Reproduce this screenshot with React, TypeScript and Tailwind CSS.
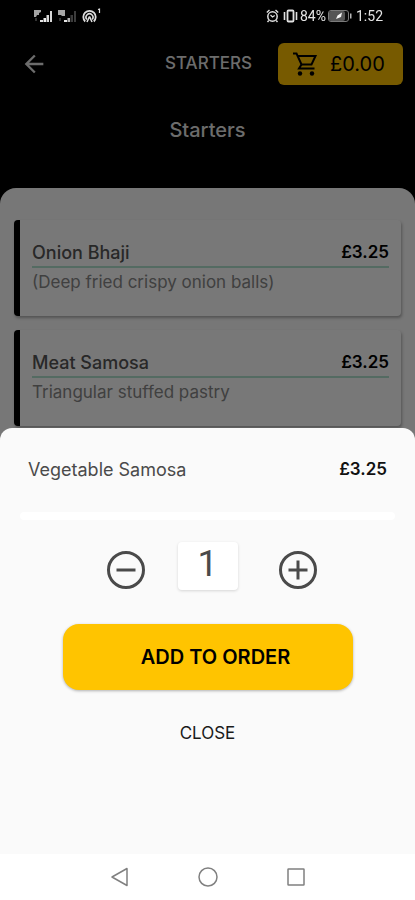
import React, { useState } from 'react';
import { MdArrowBack } from 'react-icons/md';

interface MenuItem {
  name: string;
  description: string;
  price: string;
}

const items: MenuItem[] = [
  { name: 'Onion Bhaji', description: '(Deep fried crispy onion balls)', price: '£3.25' },
  { name: 'Meat Samosa', description: 'Triangular stuffed pastry', price: '£3.25' },
];

function SignalIcon({ weak = false }: { weak?: boolean }) {
  const rest = weak ? '#3c3c3c' : '#d8d8d8';
  return (
    <svg width="20" height="14" viewBox="0 0 20 14" aria-hidden="true">
      <path d={weak ? 'M0 1h7v6H4l-1-1H0z' : 'M0 1h7v2L5 4v2H3l-1 2H0z'} fill="#a5a5a5" />
      <path d="M1 9h2v3H1z" fill="#333333" />
      <path d="M6 11h3v2H6z" fill="#e5e5e5" />
      <path d="M9.500 9h2.500v4H9.500z" fill={weak ? '#b5b5b5' : '#f0f0f0'} />
      <path d="M12.500 6H15v7h-2.500z" fill={rest} />
      <path d="M16 2h2v11h-2z" fill={rest} />
    </svg>
  );
}

function HotspotIcon() {
  return (
    <svg width="20" height="16" viewBox="0 0 20 16" fill="none" stroke="#dddddd" aria-hidden="true">
      <path d="M3.200 13.500A6.200 6.200 0 1 1 11.800 13.500" strokeWidth="1.800" />
      <path d="M4.800 11.500A3.500 3.500 0 1 1 10.200 11.500" strokeWidth="1.500" />
      <path d="M7.500 8.500L5 14M7.500 8.500L10 14" strokeWidth="1.600" />
      <path d="M16 1.500L17.500 1v4" strokeWidth="1.200" />
    </svg>
  );
}

function AlarmIcon() {
  return (
    <svg width="13" height="14" viewBox="0 0 13 14" fill="none" stroke="#e0e0e0" aria-hidden="true">
      <circle cx="6.5" cy="7.5" r="4.7" strokeWidth="1.5" />
      <path d="M.8 3.500L3.500 1M12.200 3.500L9.500 1M2.800 11.500L1.500 13M10.200 11.500L11.500 13" strokeWidth="1.400" />
      <path d="M4.500 6L6.500 8l2.200-1.500" strokeWidth="1.200" />
    </svg>
  );
}

function VibrateIcon() {
  return (
    <svg width="15" height="14" viewBox="0 0 15 14" fill="none" stroke="#e0e0e0" aria-hidden="true">
      <rect x="4.500" y="1.500" width="6" height="11" rx="1" strokeWidth="1.800" />
      <path d="M1.500 3v8M13.500 3v8" strokeWidth="1.600" />
    </svg>
  );
}

function BatteryIcon() {
  return (
    <svg width="24" height="12" viewBox="0 0 24 12" aria-hidden="true">
      <rect x="0.500" y="0.500" width="20" height="11" rx="2.500" fill="#0a0a0a" stroke="#7a7a7a" />
      <rect x="1" y="1" width="16" height="10" rx="2" fill="#555555" />
      <path d="M8 9l1.500-3.500L14 2.500 13 7z" fill="#f5f5f5" />
      <path d="M22 3.500h1.500v5H22z" fill="#b5b5b5" />
    </svg>
  );
}

function CartIcon() {
  return (
    <svg width="26" height="26" viewBox="0 0 26 26" fill="none" stroke="currentColor" strokeWidth="2" aria-hidden="true" className="shrink-0">
      <path d="M1 2.500h3.500L9.500 13.500h10L23.500 5H6" />
      <path d="M9.500 13.500L7 17.500h15.500" />
      <circle cx="8" cy="22.500" r="2.200" fill="currentColor" stroke="none" />
      <circle cx="20" cy="22.500" r="2.200" fill="currentColor" stroke="none" />
    </svg>
  );
}

function StepIcon({ path }: { path: string }) {
  return (
    <svg width="40" height="40" viewBox="0 0 40 40" fill="none" stroke="currentColor" strokeWidth="3" aria-hidden="true">
      <circle cx="20" cy="20" r="17.500" />
      <path d={path} />
    </svg>
  );
}

function StatusBar() {
  return (
    <div className="relative z-20 flex h-8 items-center justify-between px-8 text-[#e4e4e4]">
      <div className="flex items-center gap-1 pl-0.5">
        <SignalIcon />
        <SignalIcon weak />
        <HotspotIcon />
      </div>
      <div className="flex items-center gap-0.5 font-[Roboto,sans-serif] text-sm">
        <AlarmIcon />
        <span className="pl-0.5">
          <VibrateIcon />
        </span>
        <span>84%</span>
        <BatteryIcon />
        <span className="pl-0.5">1:52</span>
      </div>
    </div>
  );
}

function MenuCard({ item }: { item: MenuItem }) {
  return (
    <li className="h-24 rounded-sm border-l-6 border-black bg-[#f0f0f0] px-3 pt-5 shadow-[1px_2px_3px_rgba(0,0,0,0.3)]">
      <div className="flex h-7 items-center justify-between border-b-2 border-[#a9d6c4]">
        <span className="text-lg font-medium text-[#505050]">{item.name}</span>
        <span className="text-[17px] font-semibold text-black">{item.price}</span>
      </div>
      <p className="pt-0.5 text-[17px] leading-6 text-[#808080]">{item.description}</p>
    </li>
  );
}

function OrderSheet() {
  const [quantity, setQuantity] = useState(1);

  return (
    <section
      role="dialog"
      aria-label="Add to order"
      className="fixed inset-x-0 bottom-0 z-10 rounded-t-xl bg-[#fafafa]"
    >
      <div className="flex h-21 items-center justify-between px-7">
        <h2 className="text-lg text-[#4a4a4a]">Vegetable Samosa</h2>
        <span className="text-[17px] font-semibold text-[#111111]">£3.25</span>
      </div>
      <hr className="mx-5 h-2 rounded-sm border-0 bg-white" />

      <div className="flex items-center justify-center gap-8 pt-5.5 pl-2">
        <button
          type="button"
          aria-label="Remove one"
          onClick={() => setQuantity((n) => Math.max(1, n - 1))}
          className="pt-2 text-[#4a4a4a]"
        >
          <StepIcon path="M10.500 20h19" />
        </button>
        <input
          aria-label="Quantity"
          inputMode="numeric"
          value={quantity}
          onChange={(e) => setQuantity(Number(e.target.value) || 1)}
          className="h-12 w-15 rounded-sm bg-white pb-1 text-center font-[Roboto,sans-serif] text-4xl text-[#4a4a4a] shadow-[0_1px_3px_rgba(0,0,0,0.15)]"
        />
        <button
          type="button"
          aria-label="Add one"
          onClick={() => setQuantity((n) => n + 1)}
          className="pt-2 pl-2 text-[#4a4a4a]"
        >
          <StepIcon path="M10.500 20h19M20 10.500v19" />
        </button>
      </div>

      <div className="flex flex-col items-center px-15 pt-8.5">
        <button
          type="button"
          className="h-16.5 w-full max-w-[290px] rounded-2xl bg-[#ffc400] pl-4 text-xl font-semibold text-black shadow-[0_1px_3px_rgba(0,0,0,0.3)]"
        >
          ADD TO ORDER
        </button>
        <button type="button" className="mt-7 h-8 px-4 text-[17px] text-[#1a1a1a]">
          CLOSE
        </button>
      </div>

      <nav className="mt-26 flex h-11.5 items-center justify-center gap-16 bg-white text-[#808080]">
        <button type="button" aria-label="Back">
          <svg width="24" height="24" viewBox="0 0 24 24" fill="none" stroke="currentColor" strokeWidth="1.500" strokeLinejoin="round">
            <path d="M19 3.500v17L4 12z" />
          </svg>
        </button>
        <button type="button" aria-label="Home">
          <svg width="24" height="24" viewBox="0 0 24 24" fill="none" stroke="currentColor" strokeWidth="1.500">
            <circle cx="12" cy="12" r="9" />
          </svg>
        </button>
        <button type="button" aria-label="Recent apps">
          <svg width="24" height="24" viewBox="0 0 24 24" fill="none" stroke="currentColor" strokeWidth="1.500">
            <rect x="4" y="4" width="16" height="16" rx="0.500" />
          </svg>
        </button>
      </nav>
    </section>
  );
}

export default function App() {
  return (
    <div className="flex min-h-screen flex-col bg-black font-[Inter,sans-serif]">
      <StatusBar />

      <header className="flex h-16 items-center pr-3 pl-5 text-[#d8d8d8]">
        <button type="button" aria-label="Go back">
          <MdArrowBack size={28} />
        </button>
        <h1 className="ml-auto pr-6.5 text-[17px] font-medium">STARTERS</h1>
        <button
          type="button"
          className="flex h-[42px] w-[125px] items-center gap-3 rounded-md bg-[#eeb400] pl-3.5 text-xl text-black"
        >
          <CartIcon />
          £0.00
        </button>
      </header>

      <h2 className="pt-5 pb-11 text-center text-xl leading-7 font-medium text-[#d8d8d8]">
        Starters
      </h2>

      <main className="flex-1 rounded-t-2xl bg-[#eeeeee] px-3.5 pt-8">
        <ul className="flex flex-col gap-3.5">
          {items.map((item) => (
            <MenuCard key={item.name} item={item} />
          ))}
        </ul>
      </main>

      <div className="fixed inset-0 bg-black/50" />
      <OrderSheet />
    </div>
  );
}
